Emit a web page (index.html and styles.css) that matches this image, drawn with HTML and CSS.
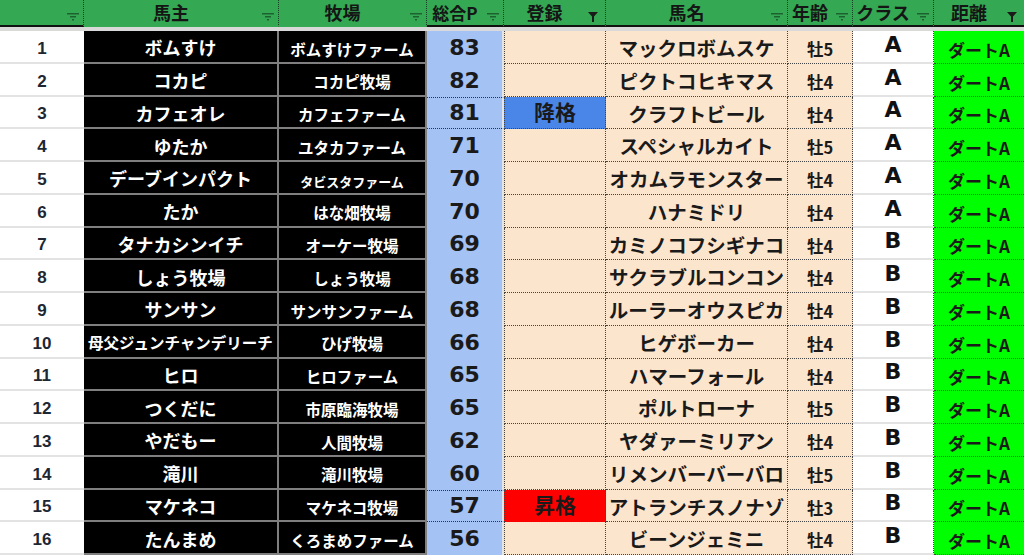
FILE: index.html
```html
<!DOCTYPE html>
<html lang="ja">
<head>
<meta charset="utf-8">
<title>ランキング</title>
<link rel="stylesheet" href="styles.css">
</head>
<body>
<div class="sheet">
  <div class="row head">
    <div class="hcell hb"><span class="htext"></span><span class="ficon"><svg width="12" height="8" viewBox="0 0 12 8"><path d="M0 .75H12M3 3.75H9M5 6.75H7" stroke="currentColor" stroke-width="1.5"/></svg></span></div>
    <div class="hcell"><span class="htext">馬主</span><span class="ficon"><svg width="12" height="8" viewBox="0 0 12 8"><path d="M0 .75H12M3 3.75H9M5 6.75H7" stroke="currentColor" stroke-width="1.5"/></svg></span></div>
    <div class="hcell"><span class="htext">牧場</span><span class="ficon"><svg width="12" height="8" viewBox="0 0 12 8"><path d="M0 .75H12M3 3.75H9M5 6.75H7" stroke="currentColor" stroke-width="1.5"/></svg></span></div>
    <div class="hcell hb"><span class="htext hsm">総合P</span><span class="ficon"><svg width="12" height="8" viewBox="0 0 12 8"><path d="M0 .75H12M3 3.75H9M5 6.75H7" stroke="currentColor" stroke-width="1.5"/></svg></span></div>
    <div class="hcell hb"><span class="htext">登録</span><span class="ficon on"><svg width="10" height="10" viewBox="0 0 10 10"><path d="M0 0H10L6 4.5V10H4V4.5Z" fill="currentColor"/></svg></span></div>
    <div class="hcell hb"><span class="htext">馬名</span><span class="ficon"><svg width="12" height="8" viewBox="0 0 12 8"><path d="M0 .75H12M3 3.75H9M5 6.75H7" stroke="currentColor" stroke-width="1.5"/></svg></span></div>
    <div class="hcell hb"><span class="htext">年齢</span><span class="ficon"><svg width="12" height="8" viewBox="0 0 12 8"><path d="M0 .75H12M3 3.75H9M5 6.75H7" stroke="currentColor" stroke-width="1.5"/></svg></span></div>
    <div class="hcell hb"><span class="htext">クラス</span><span class="ficon"><svg width="12" height="8" viewBox="0 0 12 8"><path d="M0 .75H12M3 3.75H9M5 6.75H7" stroke="currentColor" stroke-width="1.5"/></svg></span></div>
    <div class="hcell hb last"><span class="htext">距離</span><span class="ficon on"><svg width="10" height="10" viewBox="0 0 10 10"><path d="M0 0H10L6 4.5V10H4V4.5Z" fill="currentColor"/></svg></span></div>
  </div>
  <div class="band"></div>

  <div class="row"><div class="cell num">1</div><div class="cell owner">ボムすけ</div><div class="cell farm">ボムすけファーム</div><div class="cell pt">83</div><div class="cell reg"></div><div class="cell horse">マックロボムスケ</div><div class="cell age">牡5</div><div class="cell cls">A</div><div class="cell dist">ダートA</div></div>
  <div class="row"><div class="cell num">2</div><div class="cell owner">コカピ</div><div class="cell farm">コカピ牧場</div><div class="cell pt">82</div><div class="cell reg"></div><div class="cell horse">ピクトコヒキマス</div><div class="cell age">牡4</div><div class="cell cls">A</div><div class="cell dist">ダートA</div></div>
  <div class="row"><div class="cell num">3</div><div class="cell owner">カフェオレ</div><div class="cell farm">カフェファーム</div><div class="cell pt mark">81</div><div class="cell reg down">降格</div><div class="cell horse">クラフトビール</div><div class="cell age">牡4</div><div class="cell cls">A</div><div class="cell dist">ダートA</div></div>
  <div class="row"><div class="cell num">4</div><div class="cell owner">ゆたか</div><div class="cell farm">ユタカファーム</div><div class="cell pt">71</div><div class="cell reg"></div><div class="cell horse">スペシャルカイト</div><div class="cell age">牡5</div><div class="cell cls">A</div><div class="cell dist">ダートA</div></div>
  <div class="row"><div class="cell num">5</div><div class="cell owner">デーブインパクト</div><div class="cell farm xs">タビスタファーム</div><div class="cell pt">70</div><div class="cell reg"></div><div class="cell horse">オカムラモンスター</div><div class="cell age">牡4</div><div class="cell cls">A</div><div class="cell dist">ダートA</div></div>
  <div class="row"><div class="cell num">6</div><div class="cell owner">たか</div><div class="cell farm">はな畑牧場</div><div class="cell pt">70</div><div class="cell reg"></div><div class="cell horse">ハナミドリ</div><div class="cell age">牡4</div><div class="cell cls">A</div><div class="cell dist">ダートA</div></div>
  <div class="row"><div class="cell num">7</div><div class="cell owner">タナカシンイチ</div><div class="cell farm">オーケー牧場</div><div class="cell pt">69</div><div class="cell reg"></div><div class="cell horse">カミノコフシギナコ</div><div class="cell age">牡4</div><div class="cell cls">B</div><div class="cell dist">ダートA</div></div>
  <div class="row"><div class="cell num">8</div><div class="cell owner">しょう牧場</div><div class="cell farm">しょう牧場</div><div class="cell pt">68</div><div class="cell reg"></div><div class="cell horse">サクラブルコンコン</div><div class="cell age">牡4</div><div class="cell cls">B</div><div class="cell dist">ダートA</div></div>
  <div class="row"><div class="cell num">9</div><div class="cell owner">サンサン</div><div class="cell farm">サンサンファーム</div><div class="cell pt">68</div><div class="cell reg"></div><div class="cell horse">ルーラーオウスピカ</div><div class="cell age">牡4</div><div class="cell cls">B</div><div class="cell dist">ダートA</div></div>
  <div class="row"><div class="cell num">10</div><div class="cell owner sm">母父ジュンチャンデリーチ</div><div class="cell farm">ひげ牧場</div><div class="cell pt">66</div><div class="cell reg"></div><div class="cell horse">ヒゲボーカー</div><div class="cell age">牡4</div><div class="cell cls">B</div><div class="cell dist">ダートA</div></div>
  <div class="row"><div class="cell num">11</div><div class="cell owner">ヒロ</div><div class="cell farm">ヒロファーム</div><div class="cell pt">65</div><div class="cell reg"></div><div class="cell horse">ハマーフォール</div><div class="cell age">牡4</div><div class="cell cls">B</div><div class="cell dist">ダートA</div></div>
  <div class="row"><div class="cell num">12</div><div class="cell owner">つくだに</div><div class="cell farm">市原臨海牧場</div><div class="cell pt">65</div><div class="cell reg"></div><div class="cell horse">ポルトローナ</div><div class="cell age">牡5</div><div class="cell cls">B</div><div class="cell dist">ダートA</div></div>
  <div class="row"><div class="cell num">13</div><div class="cell owner">やだもー</div><div class="cell farm">人間牧場</div><div class="cell pt">62</div><div class="cell reg"></div><div class="cell horse">ヤダァーミリアン</div><div class="cell age">牡4</div><div class="cell cls">B</div><div class="cell dist">ダートA</div></div>
  <div class="row"><div class="cell num">14</div><div class="cell owner">滝川</div><div class="cell farm">滝川牧場</div><div class="cell pt">60</div><div class="cell reg"></div><div class="cell horse">リメンバーバーバロ</div><div class="cell age">牡5</div><div class="cell cls">B</div><div class="cell dist">ダートA</div></div>
  <div class="row"><div class="cell num">15</div><div class="cell owner">マケネコ</div><div class="cell farm">マケネコ牧場</div><div class="cell pt mark">57</div><div class="cell reg up">昇格</div><div class="cell horse">アトランチスノナゾ</div><div class="cell age">牡3</div><div class="cell cls">B</div><div class="cell dist">ダートA</div></div>
  <div class="row"><div class="cell num">16</div><div class="cell owner">たんまめ</div><div class="cell farm">くろまめファーム</div><div class="cell pt">56</div><div class="cell reg"></div><div class="cell horse">ビーンジェミニ</div><div class="cell age">牡4</div><div class="cell cls">B</div><div class="cell dist">ダートA</div></div>
</div>
</body>
</html>
```

FILE: styles.css
```css
html, body {
  margin: 0;
  padding: 0;
  background: #ffffff;
  overflow: hidden;
}

.sheet {
  width: 1024px;
  height: 555px;
  overflow: hidden;
  font-family: "Noto Sans CJK JP", "Noto Sans", sans-serif;
  font-weight: 700;
  color: #1a1a1a;
}

.row {
  display: grid;
  grid-template-columns: 84px 195px 148px 77px 102px 182px 65px 81px 90px;
  height: 32.75px;
}

.row.head {
  height: 27px;
}

.band {
  height: 4px;
  background: #d9d9d9;
}

/* ---------- header ---------- */
.hcell {
  box-sizing: border-box;
  display: flex;
  align-items: center;
  background: #34a853;
  border-right: 1px dotted #1c3a25;
  border-bottom: 2px solid #34a853;
  font-size: 18px;
  line-height: 1;
  color: #151515;
}

.hcell.hb {
  border-bottom-color: #111111;
}

.hcell.last {
  border-right: none;
}

.htext {
  flex: 1;
  text-align: center;
  white-space: nowrap;
  padding-bottom: 1px;
}

.htext.hsm {
  font-size: 17px;
}

.ficon {
  width: 20px;
  align-self: flex-end;
  display: flex;
  justify-content: flex-end;
  padding-right: 4px;
  padding-bottom: 4px;
  box-sizing: border-box;
  color: rgba(0, 0, 0, 0.42);
}

.ficon.on {
  color: #1a1a1a;
  padding-right: 7px;
  padding-bottom: 3px;
}

.ficon svg {
  display: block;
}

/* ---------- body cells ---------- */
.cell {
  box-sizing: border-box;
  display: flex;
  align-items: center;
  justify-content: center;
  white-space: nowrap;
  overflow: hidden;
  line-height: 1;
}

.num {
  background: #ffffff;
  border-bottom: 2px solid #e3e3e3;
  font-family: "Liberation Sans", Arial, sans-serif;
  font-size: 17px;
  color: #1d2733;
  padding-top: 4px;
}

.owner,
.farm {
  background: #000000;
  color: #ffffff;
  border-right: 2px solid #7f7f7f;
  border-bottom: 2px solid #7f7f7f;
}

.owner {
  font-size: 18px;
  padding-top: 2px;
}

.owner.sm {
  font-size: 15.5px;
  padding-top: 4px;
}

.farm {
  font-size: 15.5px;
  padding-top: 6px;
}

.farm.xs {
  font-size: 13px;
  padding-top: 8px;
}

.pt {
  background: #a4c2f4;
  border-right: 2px solid #e4e4e4;
  font-family: "DejaVu Sans", sans-serif;
  font-size: 22px;
  color: #1a1a1a;
  padding-top: 1px;
}

.pt.mark {
  border-top: 1px dotted #333333;
  border-bottom: 1px dotted #333333;
}

.reg,
.horse,
.age {
  background: #fce5cd;
  border-right: 1px dotted #444444;
  border-bottom: 1px dotted #444444;
}

.reg {
  border-left: 1px dotted #444444;
  font-size: 21px;
  padding-bottom: 1px;
}

.reg.down {
  background: #4a86e8;
}

.reg.up {
  background: #ff0000;
}

.horse {
  font-size: 19.5px;
  padding-top: 2px;
}

.age {
  font-size: 16.5px;
  padding-top: 5px;
}

.cls {
  background: #ffffff;
  border-bottom: 2px solid #e3e3e3;
  border-right: 1px dotted #444444;
  font-family: "DejaVu Sans", sans-serif;
  font-size: 22px;
  color: #111111;
  padding-bottom: 3px;
}

.dist {
  background: #00ff00;
  border-bottom: 1px dotted #444444;
  font-size: 17px;
  padding-top: 5px;
}
```
